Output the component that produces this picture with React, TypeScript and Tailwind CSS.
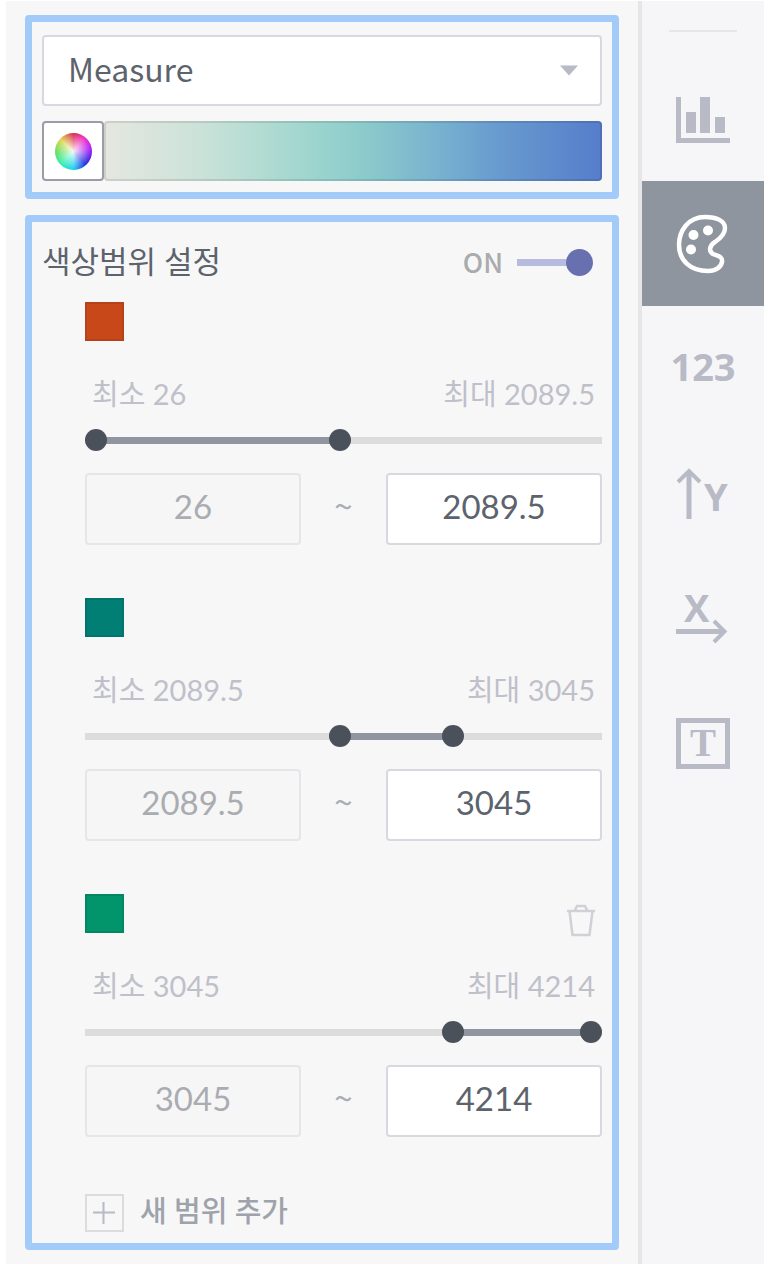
import { useState, type ReactNode } from "react";

const MIN = 26;
const MAX = 4214;

type Range = { color: string; label: string; from: number; to: number; removable?: boolean };

const initialRanges: Range[] = [
  { color: "bg-[#c84819] border-[#b54218]", label: "1", from: 26, to: 2089.5 },
  { color: "bg-[#027f75] border-[#02746c]", label: "2", from: 2089.5, to: 3045 },
  { color: "bg-[#02956c] border-[#028763]", label: "3", from: 3045, to: 4214, removable: true },
];

const thumb =
  "pointer-events-none absolute inset-0 m-0 h-[22px] w-full appearance-none bg-transparent outline-none [&::-webkit-slider-thumb]:pointer-events-auto [&::-webkit-slider-thumb]:h-[22px] [&::-webkit-slider-thumb]:w-[22px] [&::-webkit-slider-thumb]:appearance-none [&::-webkit-slider-thumb]:rounded-full [&::-webkit-slider-thumb]:bg-[#4b515b]";

function RangeSlider({ range, onChange }: { range: Range; onChange: (r: Range) => void }) {
  const left = ((range.from - MIN) / (MAX - MIN)) * 100;
  const right = 100 - ((range.to - MIN) / (MAX - MIN)) * 100;
  return (
    <div className="relative mt-[15px] flex h-[22px] items-center">
      <div className="h-[7px] w-full bg-[#dcdcdc] px-[11px]">
        <div className="relative h-full">
          <div className="absolute inset-y-0 bg-[#9095a0]" style={{ left: `${left}%`, right: `${right}%` }} />
        </div>
      </div>
      <input
        type="range"
        aria-label={`최소 ${range.label}`}
        min={MIN}
        max={MAX}
        step={0.5}
        value={range.from}
        onChange={(e) => onChange({ ...range, from: Math.min(Number(e.target.value), range.to) })}
        className={thumb}
      />
      <input
        type="range"
        aria-label={`최대 ${range.label}`}
        min={MIN}
        max={MAX}
        step={0.5}
        value={range.to}
        onChange={(e) => onChange({ ...range, to: Math.max(Number(e.target.value), range.from) })}
        className={thumb}
      />
    </div>
  );
}

function TrashIcon() {
  return (
    <svg width="30" height="34" viewBox="0 0 30 34" fill="none" stroke="#d0d1d6" strokeWidth="2.5">
      <path d="M1 7h28M3.500 7l3 24h17l3-24M8.500 7l2.500-5h8l2.500 5" />
    </svg>
  );
}

function RangeGroup({ range, onChange }: { range: Range; onChange: (r: Range) => void }) {
  return (
    <section>
      <div className="flex h-[39px] items-start justify-between">
        <button type="button" aria-label={`색상 ${range.label}`} className={`h-[39px] w-[39px] border-2 ${range.color}`} />
        {range.removable && (
          <button type="button" aria-label="삭제" className="mt-2.5 mr-1.5">
            <TrashIcon />
          </button>
        )}
      </div>
      <div className="mt-[33px] flex h-10 items-center justify-between px-[7px] text-[29px] leading-10 text-[#bfc0ca]">
        <span>최소 {range.from}</span>
        <span>최대 {range.to}</span>
      </div>
      <RangeSlider range={range} onChange={onChange} />
      <div className="mt-[22px] flex items-center text-[33px] text-[#5c636d]">
        <input
          aria-label={`최소값 ${range.label}`}
          disabled
          value={range.from}
          className="h-[72px] min-w-0 flex-1 rounded-[4px] border-2 border-[#e5e5ea] bg-[#f6f6f6] pb-1.5 text-center text-[#aaacb1]"
        />
        <span className="w-[85px] pb-2 text-center font-['Noto_Sans_CJK_KR',sans-serif] text-[33px] leading-10 text-[#a9adb4]">~</span>
        <input
          aria-label={`최대값 ${range.label}`}
          value={range.to}
          onChange={(e) => onChange({ ...range, to: Number(e.target.value) || range.from })}
          className="h-[72px] min-w-0 flex-1 rounded-[4px] border-2 border-[#d8d8e0] bg-white pb-1.5 text-center"
        />
      </div>
    </section>
  );
}

function RailButton({ label, active, children }: { label: string; active?: boolean; children: ReactNode }) {
  return (
    <button
      type="button"
      aria-label={label}
      className={`flex h-[125px] w-full items-center justify-center ${active ? "bg-[#8f959f] text-white" : "text-[#b8bac5]"}`}
    >
      {children}
    </button>
  );
}

function Rail() {
  return (
    <nav className="flex w-[126px] shrink-0 flex-col items-center border-l-4 border-[#e6e6e9] bg-[#f6f6f9]">
      <hr className="mt-[29px] mb-6 w-[68px] border-t-2 border-[#e6e6e9]" />
      <RailButton label="차트">
        <svg width="54" height="48" viewBox="0 0 54 48" fill="currentColor">
          <path d="M0 2h5v41h49v5H0zM10 17h10v21H10zM24 2h10v36H24zM39 22h10v16H39z" />
        </svg>
      </RailButton>
      <RailButton label="색상" active>
        <svg width="54" height="60" viewBox="0 0 54 60" fill="none" stroke="currentColor" strokeWidth="4.5">
          <path d="M29 3C12 3 3 17 3 31C3 46 14 57 32 57C40 57 45 53 46 48C47 42 41 42 37 40C32 37 34 31 39 28C45 24 49 19 49 14C49 7 41 3 29 3Z" />
          <g fill="currentColor" stroke="none">
            <circle cx="17.500" cy="21" r="5" />
            <circle cx="32" cy="16.500" r="5" />
            <circle cx="15" cy="35.500" r="5" />
          </g>
        </svg>
      </RailButton>
      <RailButton label="숫자">
        <span className="pb-1 font-['Open_Sans',sans-serif] text-[38px] font-bold">123</span>
      </RailButton>
      <RailButton label="Y축">
        <svg width="70" height="70" viewBox="0 0 70 70" fill="none" stroke="currentColor" strokeWidth="5">
          <path d="M21 60V13" />
          <path d="M10 23L21 12L32 23" strokeWidth="4" />
          <text x="36" y="52" fill="currentColor" stroke="none" className="font-['Open_Sans',sans-serif] text-[38px] font-bold">Y</text>
        </svg>
      </RailButton>
      <RailButton label="X축">
        <svg width="70" height="80" viewBox="0 0 70 80" fill="none" stroke="currentColor" strokeWidth="5">
          <path d="M8 52.500H57" />
          <path d="M46 42L56.500 52.500L46 63" strokeWidth="4" />
          <text x="16" y="43" fill="currentColor" stroke="none" className="font-['Open_Sans',sans-serif] text-[38px] font-bold">X</text>
        </svg>
      </RailButton>
      <RailButton label="텍스트">
        <svg width="54" height="52" viewBox="0 0 54 52" fill="none" stroke="currentColor" strokeWidth="5">
          <rect x="2.500" y="2.500" width="49" height="46" />
          <text x="27" y="38" textAnchor="middle" fill="currentColor" stroke="none" className="font-['Liberation_Serif',serif] text-[39px] font-bold">T</text>
        </svg>
      </RailButton>
    </nav>
  );
}

export default function App() {
  const [ranges, setRanges] = useState(initialRanges);
  const [on, setOn] = useState(true);

  return (
    <div className="flex bg-white pt-px pr-2.5 pb-2 pl-1.5 font-['Lato','Noto_Sans_CJK_KR',sans-serif]">
      <main className="flex min-w-0 flex-1 flex-col gap-4 bg-[#f7f7f7] pt-3.5 pr-[19px] pb-3.5 pl-[19px]">
        <section className="rounded-[4px] border-[7px] border-[#a2cbfa] px-2.5 pt-[13px] pb-[11px]">
          <div className="relative">
            <select
              aria-label="Measure"
              className="h-[71px] w-full appearance-none rounded-[4px] border-2 border-[#d8d8e0] bg-white px-6 pb-1.5 font-['Noto_Sans_CJK_KR',sans-serif] text-[32px] text-[#5c636d]"
            >
              <option>Measure</option>
            </select>
            <svg className="pointer-events-none absolute top-[30px] right-6 fill-[#b8bac5]" width="18" height="11" viewBox="0 0 18 11">
              <path d="M0 0.500h18L9 10.500z" />
            </svg>
          </div>
          <div className="mt-[15px] flex h-[60px]">
            <button
              type="button"
              aria-label="색상 선택"
              className="flex w-[62px] items-center justify-center rounded-[4px] border-2 border-[#9a9da8] bg-white"
            >
              <span className="h-[37px] w-[37px] rounded-full bg-[radial-gradient(circle,rgba(255,255,255,0.9),rgba(255,255,255,0)_68%),conic-gradient(#d83050,#f030c0_10%,#c020f0_20%,#6020e8_30%,#2030e0_38%,#20d0f0_50%,#30f0b0_62%,#60e060_74%,#e0d850_87%,#d83050)]" />
            </button>
            <button
              type="button"
              aria-label="색상 팔레트"
              className="flex-1 rounded-[4px] border-2 border-black/10 bg-[linear-gradient(90deg,#e5e7df,#cbe2d9_19%,#b8ddd3_29%,#9bd4ce_43%,#8ccbcb_52%,#78b2cf_67%,#689bcf_79%,#567dcb)] bg-origin-border"
            />
          </div>
        </section>

        <section className="rounded-[4px] border-[7px] border-[#a2cbfa] pr-2.5 pb-[11px] pl-2.5">
          <div className="flex h-20 items-center justify-between pr-[9px]">
            <h2 className="pb-0.5 text-[31px] text-[#5c636d]">색상범위 설정</h2>
            <label className="flex items-center gap-3.5 font-['Noto_Sans_CJK_KR',sans-serif] text-[27px] font-medium text-[#aaabae]">
              {on ? "ON" : "OFF"}
              <input
                type="checkbox"
                role="switch"
                checked={on}
                onChange={(e) => setOn(e.target.checked)}
                className="flex h-[27px] w-[76px] appearance-none items-center justify-start bg-[linear-gradient(#b7bbdd,#b7bbdd)] bg-[length:70px_7px] bg-left bg-no-repeat before:h-[27px] before:w-[27px] before:rounded-full before:bg-[#6970b0] checked:justify-end"
              />
            </label>
          </div>
          <div className="flex flex-col gap-[53px] pl-[43px]">
            {ranges.map((range, i) => (
              <RangeGroup
                key={range.label}
                range={range}
                onChange={(next) => setRanges(ranges.map((r, j) => (j === i ? next : r)))}
              />
            ))}
          </div>
          <button type="button" className="mt-[57px] ml-[43px] flex h-[38px] items-center gap-4 text-[29px] font-medium text-[#9ea3ab]">
            <svg width="39" height="38" viewBox="0 0 39 38" fill="none" strokeWidth="2">
              <rect x="1" y="1" width="37" height="36" stroke="#dcdcdd" />
              <path d="M8 18.500h22M18.500 8v22" stroke="#b8bac5" />
            </svg>
            <span className="pb-1">새 범위 추가</span>
          </button>
        </section>
      </main>
      <Rail />
    </div>
  );
}
